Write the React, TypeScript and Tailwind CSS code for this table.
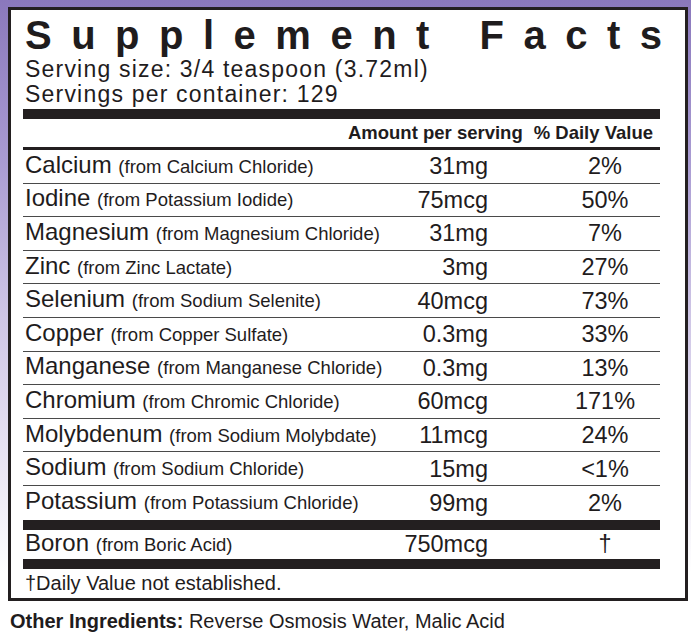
const rows = [
  { name: "Calcium", source: "(from Calcium Chloride)", amount: "31mg", dv: "2%" },
  { name: "Iodine", source: "(from Potassium Iodide)", amount: "75mcg", dv: "50%" },
  { name: "Magnesium", source: "(from Magnesium Chloride)", amount: "31mg", dv: "7%" },
  { name: "Zinc", source: "(from Zinc Lactate)", amount: "3mg", dv: "27%" },
  { name: "Selenium", source: "(from Sodium Selenite)", amount: "40mcg", dv: "73%" },
  { name: "Copper", source: "(from Copper Sulfate)", amount: "0.3mg", dv: "33%" },
  { name: "Manganese", source: "(from Manganese Chloride)", amount: "0.3mg", dv: "13%" },
  { name: "Chromium", source: "(from Chromic Chloride)", amount: "60mcg", dv: "171%" },
  { name: "Molybdenum", source: "(from Sodium Molybdate)", amount: "11mcg", dv: "24%" },
  { name: "Sodium", source: "(from Sodium Chloride)", amount: "15mg", dv: "<1%" },
  { name: "Potassium", source: "(from Potassium Chloride)", amount: "99mg", dv: "2%" },
];

function Row({
  name,
  source,
  amount,
  dv,
  last,
}: {
  name: string;
  source: string;
  amount: string;
  dv: string;
  last?: boolean;
}) {
  return (
    <div
      className={`flex items-center h-[33.6px] ${
        last ? "" : "border-b border-[#4a4a4a]"
      }`}
    >
      <div className="flex-1 pl-[2px] whitespace-nowrap leading-[32px]">
        <span className="text-[24px]">{name} </span>
        <span className="text-[18.5px]">{source}</span>
      </div>
      <div className="w-[100px] text-right text-[23.5px] leading-[32px]">{amount}</div>
      <div className="ml-[77px] mr-[15px] w-[80px] text-center text-[23.5px] leading-[32px]">
        {dv}
      </div>
    </div>
  );
}

export default function App() {
  return (
    <div className="w-[691px] h-[637px] pt-[7px] pl-[8px] bg-[linear-gradient(to_bottom,#8a78bc_0%,#a99bd2_25%,#cfc6e6_50%,#ece8f5_75%,#ffffff_90%)] font-['Liberation_Sans',Arial,sans-serif] text-[#1f1c1d]">
      <div className="w-[680px] border-[3px] border-[#231f20] bg-white pl-[12px] pr-[25px]">
        {/* TITLE */}
        <h1 className="pt-[5px] pl-[2px] text-[40px] leading-[40px] font-bold tracking-[19.5px] whitespace-nowrap">
          Supplement Facts
        </h1>
        <div className="mt-[2px] pl-[2px] text-[23px] leading-[25px] tracking-[1.2px]">
          <p>Serving size: 3/4 teaspoon (3.72ml)</p>
          <p>Servings per container: 129</p>
        </div>
        <div className="mt-[2px] h-[10px] bg-[#231f20]" />

        {/* HEADER */}
        <div className="flex justify-end gap-[11px] pr-[7px] h-[28px] text-[18.5px] leading-[28px] font-bold">
          <span>Amount per serving</span>
          <span>% Daily Value</span>
        </div>
        <div className="h-[3px] bg-[#231f20]" />

        {/* NUTRIENTS */}
        {rows.map((r, i) => (
          <Row key={r.name} {...r} last={i === rows.length - 1} />
        ))}
        <div className="h-[10px] bg-[#231f20]" />
        <div className="flex items-center h-[29px]">
          <div className="flex-1 pl-[2px] whitespace-nowrap leading-[26px]">
            <span className="text-[24px]">Boron </span>
            <span className="text-[18.5px]">(from Boric Acid)</span>
          </div>
          <div className="w-[100px] text-right text-[23.5px] leading-[26px]">750mcg</div>
          <div className="ml-[77px] mr-[15px] w-[80px] text-center text-[23.5px] leading-[26px]">
            †
          </div>
        </div>
        <div className="h-[10px] bg-[#231f20]" />
        <p className="pl-[2px] h-[29px] text-[20px] leading-[29px]">
          †Daily Value not established.
        </p>
      </div>

      {/* OTHER INGREDIENTS */}
      <p className="mt-[8px] pl-[2px] text-[20px] leading-[24px] whitespace-nowrap">
        <span className="font-bold">Other Ingredients:</span> Reverse Osmosis Water, Malic Acid
      </p>
    </div>
  );
}
